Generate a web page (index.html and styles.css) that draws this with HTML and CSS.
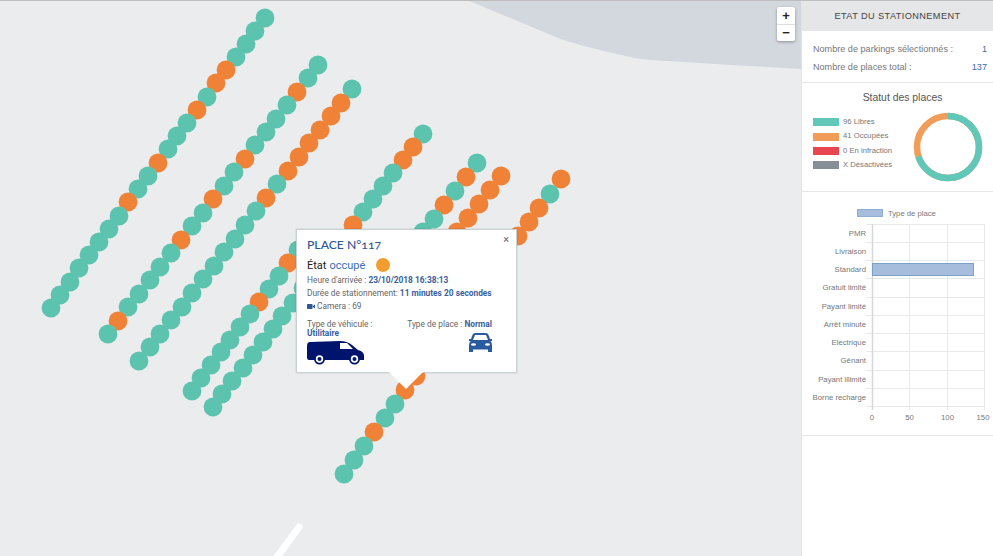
FILE: index.html
```html
<!DOCTYPE html>
<html lang="fr">
  <head>
    <meta charset="UTF-8" />
    <title>Etat du stationnement</title>
    <link rel="stylesheet" href="styles.css">
  </head>
  <body>
    <div class="page">
      <div class="map">
        <svg class="map-canvas" viewBox="0 1 801 555" width="801" height="555">
          <path class="water" d="M467 0 L563 40 Q600 51 640 59 Q660 61 802 69 L802 0 Z" />
          <path class="road" d="M299 527 L272 564" />
          <g>
            <circle class="free" cx="265" cy="18" r="9.4" />
            <circle class="free" cx="255" cy="31" r="9.4" />
            <circle class="free" cx="246" cy="44" r="9.4" />
            <circle class="free" cx="236" cy="57" r="9.4" />
            <circle class="busy" cx="226" cy="70" r="9.4" />
            <circle class="busy" cx="216" cy="83" r="9.4" />
            <circle class="free" cx="207" cy="97" r="9.4" />
            <circle class="busy" cx="197" cy="110" r="9.4" />
            <circle class="free" cx="187" cy="123" r="9.4" />
            <circle class="free" cx="177" cy="136" r="9.4" />
            <circle class="free" cx="168" cy="149" r="9.4" />
            <circle class="busy" cx="158" cy="163" r="9.4" />
            <circle class="free" cx="148" cy="176" r="9.4" />
            <circle class="free" cx="138" cy="189" r="9.4" />
            <circle class="busy" cx="128" cy="202" r="9.4" />
            <circle class="free" cx="119" cy="216" r="9.4" />
            <circle class="free" cx="109" cy="229" r="9.4" />
            <circle class="free" cx="99" cy="242" r="9.4" />
            <circle class="free" cx="89" cy="255" r="9.4" />
            <circle class="free" cx="79" cy="268" r="9.4" />
            <circle class="free" cx="70" cy="282" r="9.4" />
            <circle class="free" cx="60" cy="295" r="9.4" />
            <circle class="free" cx="51" cy="308" r="9.4" />
          </g>
          <g>
            <circle class="free" cx="318" cy="65" r="9.4" />
            <circle class="free" cx="308" cy="78" r="9.4" />
            <circle class="busy" cx="297" cy="92" r="9.4" />
            <circle class="free" cx="287" cy="105" r="9.4" />
            <circle class="free" cx="276" cy="119" r="9.4" />
            <circle class="free" cx="266" cy="132" r="9.4" />
            <circle class="free" cx="255" cy="145" r="9.4" />
            <circle class="busy" cx="245" cy="159" r="9.4" />
            <circle class="free" cx="234" cy="172" r="9.4" />
            <circle class="free" cx="224" cy="186" r="9.4" />
            <circle class="busy" cx="213" cy="199" r="9.4" />
            <circle class="free" cx="203" cy="213" r="9.4" />
            <circle class="free" cx="192" cy="226" r="9.4" />
            <circle class="busy" cx="181" cy="240" r="9.4" />
            <circle class="free" cx="171" cy="253" r="9.4" />
            <circle class="free" cx="160" cy="267" r="9.4" />
            <circle class="free" cx="150" cy="280" r="9.4" />
            <circle class="free" cx="139" cy="294" r="9.4" />
            <circle class="free" cx="128" cy="307" r="9.4" />
            <circle class="busy" cx="118" cy="321" r="9.4" />
            <circle class="free" cx="108" cy="334" r="9.4" />
          </g>
          <g>
            <circle class="free" cx="352" cy="89" r="9.4" />
            <circle class="busy" cx="341" cy="103" r="9.4" />
            <circle class="busy" cx="331" cy="116" r="9.4" />
            <circle class="busy" cx="320" cy="130" r="9.4" />
            <circle class="busy" cx="309" cy="143" r="9.4" />
            <circle class="busy" cx="299" cy="157" r="9.4" />
            <circle class="busy" cx="288" cy="171" r="9.4" />
            <circle class="free" cx="277" cy="184" r="9.4" />
            <circle class="busy" cx="266" cy="198" r="9.4" />
            <circle class="free" cx="256" cy="211" r="9.4" />
            <circle class="free" cx="245" cy="225" r="9.4" />
            <circle class="free" cx="235" cy="239" r="9.4" />
            <circle class="free" cx="224" cy="252" r="9.4" />
            <circle class="free" cx="214" cy="266" r="9.4" />
            <circle class="free" cx="203" cy="279" r="9.4" />
            <circle class="free" cx="192" cy="293" r="9.4" />
            <circle class="free" cx="182" cy="307" r="9.4" />
            <circle class="free" cx="171" cy="320" r="9.4" />
            <circle class="free" cx="160" cy="334" r="9.4" />
            <circle class="free" cx="150" cy="347" r="9.4" />
            <circle class="free" cx="139" cy="361" r="9.4" />
          </g>
          <g>
            <circle class="free" cx="298" cy="250" r="9.4" />
            <circle class="busy" cx="288" cy="263" r="9.4" />
            <circle class="free" cx="279" cy="276" r="9.4" />
            <circle class="free" cx="269" cy="289" r="9.4" />
            <circle class="busy" cx="259" cy="302" r="9.4" />
            <circle class="free" cx="250" cy="314" r="9.4" />
            <circle class="free" cx="240" cy="327" r="9.4" />
            <circle class="free" cx="230" cy="340" r="9.4" />
            <circle class="free" cx="221" cy="352" r="9.4" />
            <circle class="free" cx="211" cy="365" r="9.4" />
            <circle class="free" cx="201" cy="378" r="9.4" />
            <circle class="free" cx="192" cy="391" r="9.4" />
          </g>
          <g>
            <circle class="free" cx="423" cy="134" r="9.4" />
            <circle class="busy" cx="413" cy="147" r="9.4" />
            <circle class="busy" cx="403" cy="160" r="9.4" />
            <circle class="free" cx="393" cy="173" r="9.4" />
            <circle class="free" cx="383" cy="186" r="9.4" />
            <circle class="free" cx="373" cy="199" r="9.4" />
            <circle class="free" cx="363" cy="212" r="9.4" />
            <circle class="busy" cx="353" cy="225" r="9.4" />
            <circle class="free" cx="303" cy="288" r="9.4" />
            <circle class="free" cx="293" cy="303" r="9.4" />
            <circle class="free" cx="282" cy="316" r="9.4" />
            <circle class="free" cx="273" cy="329" r="9.4" />
            <circle class="free" cx="263" cy="342" r="9.4" />
            <circle class="free" cx="253" cy="355" r="9.4" />
            <circle class="free" cx="243" cy="368" r="9.4" />
            <circle class="free" cx="232" cy="381" r="9.4" />
            <circle class="free" cx="222" cy="394" r="9.4" />
            <circle class="free" cx="213" cy="407" r="9.4" />
          </g>
          <g>
            <circle class="free" cx="477" cy="163" r="9.4" />
            <circle class="busy" cx="466" cy="177" r="9.4" />
            <circle class="free" cx="455" cy="191" r="9.4" />
            <circle class="busy" cx="444" cy="205" r="9.4" />
            <circle class="free" cx="434" cy="219" r="9.4" />
            <circle class="free" cx="423" cy="232" r="9.4" />
          </g>
          <g>
            <circle class="busy" cx="501" cy="176" r="9.4" />
            <circle class="busy" cx="490" cy="190" r="9.4" />
            <circle class="busy" cx="479" cy="204" r="9.4" />
            <circle class="busy" cx="468" cy="218" r="9.4" />
            <circle class="busy" cx="457" cy="232" r="9.4" />
          </g>
          <g>
            <circle class="busy" cx="561" cy="179" r="9.4" />
            <circle class="free" cx="550" cy="194" r="9.4" />
            <circle class="busy" cx="539" cy="208" r="9.4" />
            <circle class="busy" cx="529" cy="222" r="9.4" />
            <circle class="busy" cx="518" cy="236" r="9.4" />
          </g>
          <g>
            <circle class="busy" cx="416" cy="376" r="9.4" />
            <circle class="busy" cx="405" cy="390" r="9.4" />
            <circle class="free" cx="395" cy="404" r="9.4" />
            <circle class="free" cx="385" cy="418" r="9.4" />
            <circle class="busy" cx="374" cy="432" r="9.4" />
            <circle class="free" cx="364" cy="446" r="9.4" />
            <circle class="free" cx="354" cy="460" r="9.4" />
            <circle class="free" cx="344" cy="474" r="9.4" />
          </g>
        </svg>

        <div class="zoom-control">
          <a class="zoom-btn">+</a>
          <a class="zoom-btn">&minus;</a>
        </div>

        <div class="popup">
          <span class="popup-close">&times;</span>
          <h2 class="popup-title">PLACE N°117</h2>
          <div class="popup-state">
            État <span class="blue">occupé</span>
            <span class="state-dot"></span>
          </div>
          <p class="popup-line popup-line-first">Heure d'arrivée : <b>23/10/2018 16:38:13</b></p>
          <p class="popup-line">Durée de stationnement: <b>11 minutes 20 secondes</b></p>
          <p class="popup-line">
            <svg class="camera-icon" viewBox="0 0 8 5" width="8" height="5">
              <rect x="0" y="0" width="5.6" height="5" rx="0.8" />
              <path d="M6 2 L8 0.5 V4.5 L6 3 Z" />
            </svg>
            Camera : 69
          </p>
          <div class="popup-types">
            <div class="type-vehicle">
              <div>Type de véhicule :</div>
              <b>Utilitaire</b>
              <svg class="van-icon" viewBox="0 0 58 24" width="58" height="24">
                <path class="van-body" d="M3 1 L33 0 Q40 0 45 4 L51 9 Q56 10 57 14 L57 19 L2 19 Q0 19 0 16 L0 5 Q0 1 3 1 Z" />
                <path class="van-window" d="M33 2 L40 2 L46 8 L33 8 Z" />
                <circle class="van-body" cx="12.500" cy="18" r="5.500" />
                <circle class="van-window" cx="12.500" cy="18" r="3.700" />
                <circle class="van-body" cx="12.500" cy="18" r="2" />
                <circle class="van-body" cx="47.500" cy="18" r="5.500" />
                <circle class="van-window" cx="47.500" cy="18" r="3.700" />
                <circle class="van-body" cx="47.500" cy="18" r="2" />
              </svg>
            </div>
            <div class="type-place">
              <div>Type de place : <b>Normal</b></div>
              <svg class="car-icon" viewBox="0 0 23 19" width="23" height="19">
                <path class="car-body" d="M6 0 H17 Q19 0 20 3 L21 6 H23 V8 H21.500 Q23 10 23 12 V19 H19 V16.500 H4 V19 H0 V12 Q0 10 1.500 8 H0 V6 H2 L3 3 Q4 0 6 0 Z" />
                <path class="van-window" d="M6 2 H17 L19 7 H4 Z" />
                <ellipse class="van-window" cx="4.500" cy="11.500" rx="2.500" ry="1.300" />
                <ellipse class="van-window" cx="18.500" cy="11.500" rx="2.500" ry="1.300" />
              </svg>
            </div>
          </div>
        </div>
      </div>

      <aside class="sidebar">
        <h1 class="side-header">ETAT DU STATIONNEMENT</h1>
        <section class="counts">
          <div class="count-row"><span>Nombre de parkings sélectionnés :</span><span class="blue">1</span></div>
          <div class="count-row"><span>Nombre de places total :</span><span class="blue">137</span></div>
        </section>
        <section class="status">
          <h3 class="status-title">Statut des places</h3>
          <div class="status-body">
            <ul class="legend">
              <li><span class="swatch swatch-free"></span>96 Libres</li>
              <li><span class="swatch swatch-busy"></span>41 Occupées</li>
              <li><span class="swatch swatch-fault"></span>0 En infraction</li>
              <li><span class="swatch swatch-off"></span>X Désactivées</li>
            </ul>
            <svg class="donut" viewBox="0 0 70 70" width="70" height="70">
              <circle class="donut-busy" cx="35" cy="35" r="31" />
              <circle class="donut-free" cx="35" cy="35" r="31" pathLength="137" stroke-dasharray="96 41" transform="rotate(-90 35 35)" />
            </svg>
          </div>
        </section>
        <section class="chart">
          <div class="chart-legend"><span class="swatch swatch-type"></span>Type de place</div>
          <svg class="bars" viewBox="0 0 191 208" width="191" height="208">
            <g class="grid">
              <path d="M64 7.500 H183" />
              <path d="M64 25.500 H183" />
              <path d="M64 43.500 H183" />
              <path d="M64 61.500 H183" />
              <path d="M64 80.500 H183" />
              <path d="M64 98.500 H183" />
              <path d="M64 116.500 H183" />
              <path d="M64 134.500 H183" />
              <path d="M64 153.500 H183" />
              <path d="M64 171.500 H183" />
              <path d="M64 189.500 H183" />
              <path d="M107.500 7 V193" />
              <path d="M145.500 7 V193" />
              <path d="M182.500 7 V193" />
            </g>
            <path class="axis" d="M70.500 7 V193" />
            <rect class="bar" x="70.500" y="46.500" width="101" height="12" />
            <g class="bar-labels">
              <text x="64" y="19">PMR</text>
              <text x="64" y="37">Livraison</text>
              <text x="64" y="55">Standard</text>
              <text x="64" y="73">Gratuit limité</text>
              <text x="64" y="92">Payant limité</text>
              <text x="64" y="110">Arrêt minute</text>
              <text x="64" y="128">Electrique</text>
              <text x="64" y="146">Gênant</text>
              <text x="64" y="165">Payant illimité</text>
              <text x="64" y="183">Borne recharge</text>
            </g>
            <g class="tick-labels">
              <text x="70" y="203">0</text>
              <text x="107.500" y="203">50</text>
              <text x="145.500" y="203">100</text>
              <text x="181" y="203">150</text>
            </g>
          </svg>
        </section>
      </aside>
    </div>
  </body>
</html>
```

FILE: styles.css
```css
* {
  margin: 0;
  padding: 0;
  box-sizing: border-box;
}
body {
  font-family: Roboto, "Liberation Sans", sans-serif;
  background-color: #fff;
  overflow: hidden;
}
.page {
  display: flex;
  height: 556px;
  border-top: 1px solid #bdbdbd;
  overflow: hidden;
}
.blue {
  color: #3a6cb2;
}

/* map */
.map {
  position: relative;
  width: 801px;
  height: 555px;
  flex: none;
  background-color: #ebeced;
  overflow: hidden;
}
.map-canvas {
  display: block;
}
.water {
  fill: #d3d7de;
}
.road {
  fill: none;
  stroke: #fff;
  stroke-width: 7;
  stroke-linecap: round;
}
.free {
  fill: #5cc3ae;
}
.busy {
  fill: #f08238;
}
.zoom-control {
  position: absolute;
  top: 6px;
  left: 777px;
  width: 18px;
  background-color: #fff;
  border-radius: 2px;
  box-shadow: 0 1px 3px rgba(0, 0, 0, 0.35);
}
.zoom-btn {
  display: block;
  height: 17px;
  line-height: 18px;
  text-align: center;
  font-family: "Liberation Sans", sans-serif;
  font-size: 13px;
  font-weight: bold;
  color: #222;
}
.zoom-btn + .zoom-btn {
  line-height: 16px;
  border-top: 1px solid #ddd;
}

/* popup */
.popup {
  position: absolute;
  top: 228px;
  left: 296px;
  width: 221px;
  height: 144px;
  padding: 7px 10px;
  background-color: #fff;
  border: 1px solid #c8d0d0;
  box-shadow: 0 0 2px rgba(0, 0, 0, 0.15);
  color: #666;
  font-size: 8.350px;
}
.popup::after {
  content: "";
  position: absolute;
  left: 92px;
  top: 100%;
  border-top: 17px solid #fff;
  border-left: 17px solid transparent;
  border-right: 17px solid transparent;
}
.popup-close {
  position: absolute;
  top: 3px;
  right: 7px;
  font-size: 11px;
  color: #666;
}
.popup-title {
  font-family: Lato, sans-serif;
  font-size: 12.200px;
  font-weight: 500;
  line-height: 15px;
  font-variant-numeric: oldstyle-nums;
  color: #2f5597;
}
.popup-state {
  display: flex;
  align-items: center;
  gap: 3px;
  margin-top: 6px;
  height: 14px;
  font-size: 11px;
  color: #222;
}
.state-dot {
  width: 14px;
  height: 14px;
  margin-left: 8px;
  border-radius: 50%;
  background-color: #f39c2f;
}
.popup-line {
  margin-top: 2px;
  line-height: 11px;
}
.popup-line-first {
  margin-top: 3px;
}
.popup-line b,
.popup-types b {
  color: #3b5f9e;
}
.camera-icon {
  fill: #2f5597;
}
.popup-types {
  display: flex;
  justify-content: space-between;
  margin-top: 8px;
  padding-right: 14px;
  line-height: 9px;
}
.van-icon {
  display: block;
  margin-top: 3px;
}
.van-body {
  fill: #00146e;
}
.van-window {
  fill: #fff;
}
.car-body {
  fill: #2a5a9f;
}
.type-place {
  display: flex;
  flex-direction: column;
  align-items: flex-end;
}
.car-icon {
  margin-top: 4px;
}

/* sidebar */
.sidebar {
  width: 192px;
  flex: none;
  border-left: 1px solid #e2e4e6;
  font-family: "Liberation Sans", sans-serif;
  color: #777;
}
.side-header {
  height: 30px;
  padding-left: 0;
  line-height: 30px;
  text-align: center;
  font-size: 9.200px;
  font-weight: 400;
  letter-spacing: 0.4px;
  color: #444;
  background-color: #e5e6e8;
}
.counts {
  height: 52px;
  padding: 9px 6px 0 11px;
  border-bottom: 1px solid #e6e7e9;
  font-size: 9.100px;
}
.count-row {
  display: flex;
  justify-content: space-between;
  line-height: 18px;
}
.status {
  height: 109px;
  border-bottom: 1px solid #e6e7e9;
}
.status-title {
  padding-top: 8px;
  padding-left: 10px;
  text-align: center;
  font-size: 10.400px;
  font-weight: 400;
  line-height: 14px;
  color: #555;
}
.status-body {
  display: flex;
  justify-content: space-between;
  padding: 7px 10px 0 11px;
}
.legend {
  list-style: none;
  padding-top: 3px;
  font-size: 7.700px;
  line-height: 14.400px;
}
.legend li {
  display: flex;
  align-items: center;
}
.swatch {
  display: inline-block;
  width: 26px;
  height: 8px;
  margin-right: 4px;
}
.swatch-free {
  background-color: #60c8b8;
}
.swatch-busy {
  background-color: #f09d5a;
}
.swatch-fault {
  background-color: #e8474f;
}
.swatch-off {
  background-color: #868e96;
}
.swatch-type {
  background-color: #a6bddb;
  border: 1px solid #8fadd2;
  margin-right: 5px;
}
.donut {
  fill: none;
  stroke-width: 6.500;
}
.donut-busy {
  stroke: #f09d5a;
}
.donut-free {
  stroke: #60c8b8;
}

/* bar chart */
.chart {
  height: 244px;
  padding-top: 17px;
  border-bottom: 1px solid #e6e7e9;
}
.chart-legend {
  display: flex;
  align-items: center;
  height: 8px;
  padding-left: 55px;
  font-size: 7.700px;
}
.bars {
  display: block;
}
.grid path {
  stroke: #e8e9ea;
  fill: none;
}
.axis {
  stroke: #d5d7d8;
  stroke-width: 1.500;
  fill: none;
}
.bar {
  fill: #a6bddb;
  stroke: #7f9fcb;
}
.bars text {
  font-size: 7.750px;
  fill: #777;
}
.bar-labels text {
  text-anchor: end;
}
.tick-labels text {
  text-anchor: middle;
}
```
